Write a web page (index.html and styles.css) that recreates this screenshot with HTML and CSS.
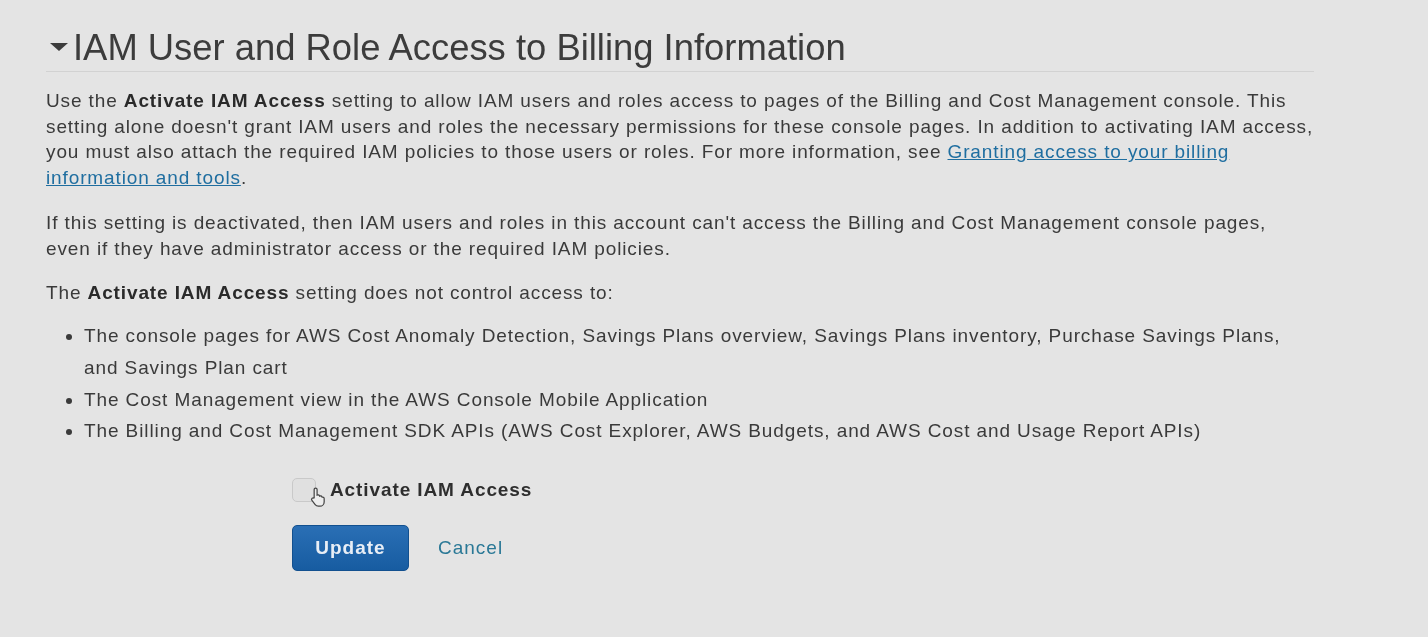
FILE: index.html
```html
<!DOCTYPE html>
<html>
<head>
<meta charset="utf-8">
<link rel="stylesheet" href="styles.css">
</head>
<body>
<main class="page">
  <section class="panel">
    <h2 class="panel-title"><span class="caret"></span>IAM User and Role Access to Billing Information</h2>
    <p class="para">Use the <b>Activate IAM Access</b> setting to allow IAM users and roles access to pages of the Billing and Cost Management console. This setting alone doesn't grant IAM users and roles the necessary permissions for these console pages. In addition to activating IAM access, you must also attach the required IAM policies to those users or roles. For more information, see <a class="link" href="#">Granting access to your billing information and tools</a>.</p>
    <p class="para">If this setting is deactivated, then IAM users and roles in this account can't access the Billing and Cost Management console pages, <span class="nowrap">even if</span> they have administrator access or the required IAM policies.</p>
    <p class="para">The <b>Activate IAM Access</b> setting does not control access to:</p>
    <ul class="list">
      <li>The console pages for AWS Cost Anomaly Detection, Savings Plans overview, Savings Plans inventory, Purchase Savings Plans, and Savings Plan cart</li>
      <li>The Cost Management view in the AWS Console Mobile Application</li>
      <li>The Billing and Cost Management SDK APIs (AWS Cost Explorer, AWS Budgets, and AWS Cost and Usage Report APIs)</li>
    </ul>
    <form class="form">
      <label class="check-row">
        <span class="checkbox"></span>
        <span class="check-label">Activate IAM Access</span>
        <svg class="cursor" width="18" height="21" viewBox="0 0 16 18"><path d="M5 1.5c.8 0 1.3.6 1.3 1.3v5l.6-.2c.7-.2 1.3.2 1.5.7l.2.4.6-.2c.7-.1 1.2.2 1.4.8l.1.3.6-.1c.8 0 1.3.6 1.3 1.3v2.8c0 2.2-1.6 4-3.8 4H7.4c-1.1 0-2.1-.5-2.8-1.4L1.7 12.4c-.5-.6-.4-1.4.2-1.9.6-.4 1.4-.3 1.9.2l-.1-.1V2.8C3.7 2.1 4.2 1.5 5 1.5z" fill="#ededed" stroke="#444" stroke-width="1.1"/></svg>
      </label>
      <div class="actions">
        <button type="button" class="btn-primary">Update</button>
        <a class="btn-link" href="#">Cancel</a>
      </div>
    </form>
  </section>
</main>
</body>
</html>
```

FILE: styles.css
```css
html, body {
  margin: 0;
  padding: 0;
  background: #e4e4e4;
}
body {
  font-family: "Liberation Sans", Arial, Helvetica, sans-serif;
  color: #3a3a3a;
  filter: blur(0.7px);
}
.page {
  padding: 26px 0 0 46px;
  width: 1268px;
}
.panel-title {
  position: relative;
  margin: 0;
  padding: 0 0 1px 27px;
  font-size: 36.4px;
  font-weight: normal;
  line-height: 44px;
  color: #3c3c3c;
  border-bottom: 1px solid #d2d2d2;
}
.caret {
  position: absolute;
  left: 4px;
  top: 17px;
  width: 0;
  height: 0;
  border-left: 9px solid transparent;
  border-right: 9px solid transparent;
  border-top: 8px solid #3c3c3c;
}
.para {
  margin: 16px -16px 0 0;
  font-size: 19px;
  letter-spacing: 0.88px;
  line-height: 25.7px;
}
.para + .para {
  margin-top: 19px;
}
.para b {
  color: #2a2a2a;
}
.nowrap {
  white-space: nowrap;
}
.link {
  color: #1f6ea0;
  text-decoration: underline;
}
.list {
  margin: 14px 0 0;
  padding-left: 38px;
  font-size: 19px;
  letter-spacing: 0.9px;
  line-height: 31.8px;
}
.form {
  margin: 30px 0 0 246px;
}
.check-row {
  position: relative;
  display: flex;
  align-items: center;
  gap: 14px;
  height: 26px;
}
.checkbox {
  width: 22px;
  height: 22px;
  border: 1px solid #c9c9c9;
  border-radius: 5px;
  background: #e0e0e0;
}
.check-label {
  font-size: 19px;
  letter-spacing: 0.9px;
  font-weight: bold;
  color: #2e2e2e;
}
.cursor {
  position: absolute;
  left: 18px;
  top: 9px;
}
.actions {
  display: flex;
  align-items: center;
  gap: 29px;
  margin-top: 22px;
}
.btn-primary {
  width: 117px;
  height: 46px;
  border: 1px solid #12508f;
  border-radius: 5px;
  background: linear-gradient(#2a6fb5, #175ca1);
  color: #e8eef6;
  font-family: "Liberation Sans", Arial, sans-serif;
  font-size: 19px;
  letter-spacing: 1px;
  font-weight: bold;
}
.btn-link {
  font-size: 19px;
  letter-spacing: 1px;
  color: #2a7896;
  text-decoration: none;
}
```
